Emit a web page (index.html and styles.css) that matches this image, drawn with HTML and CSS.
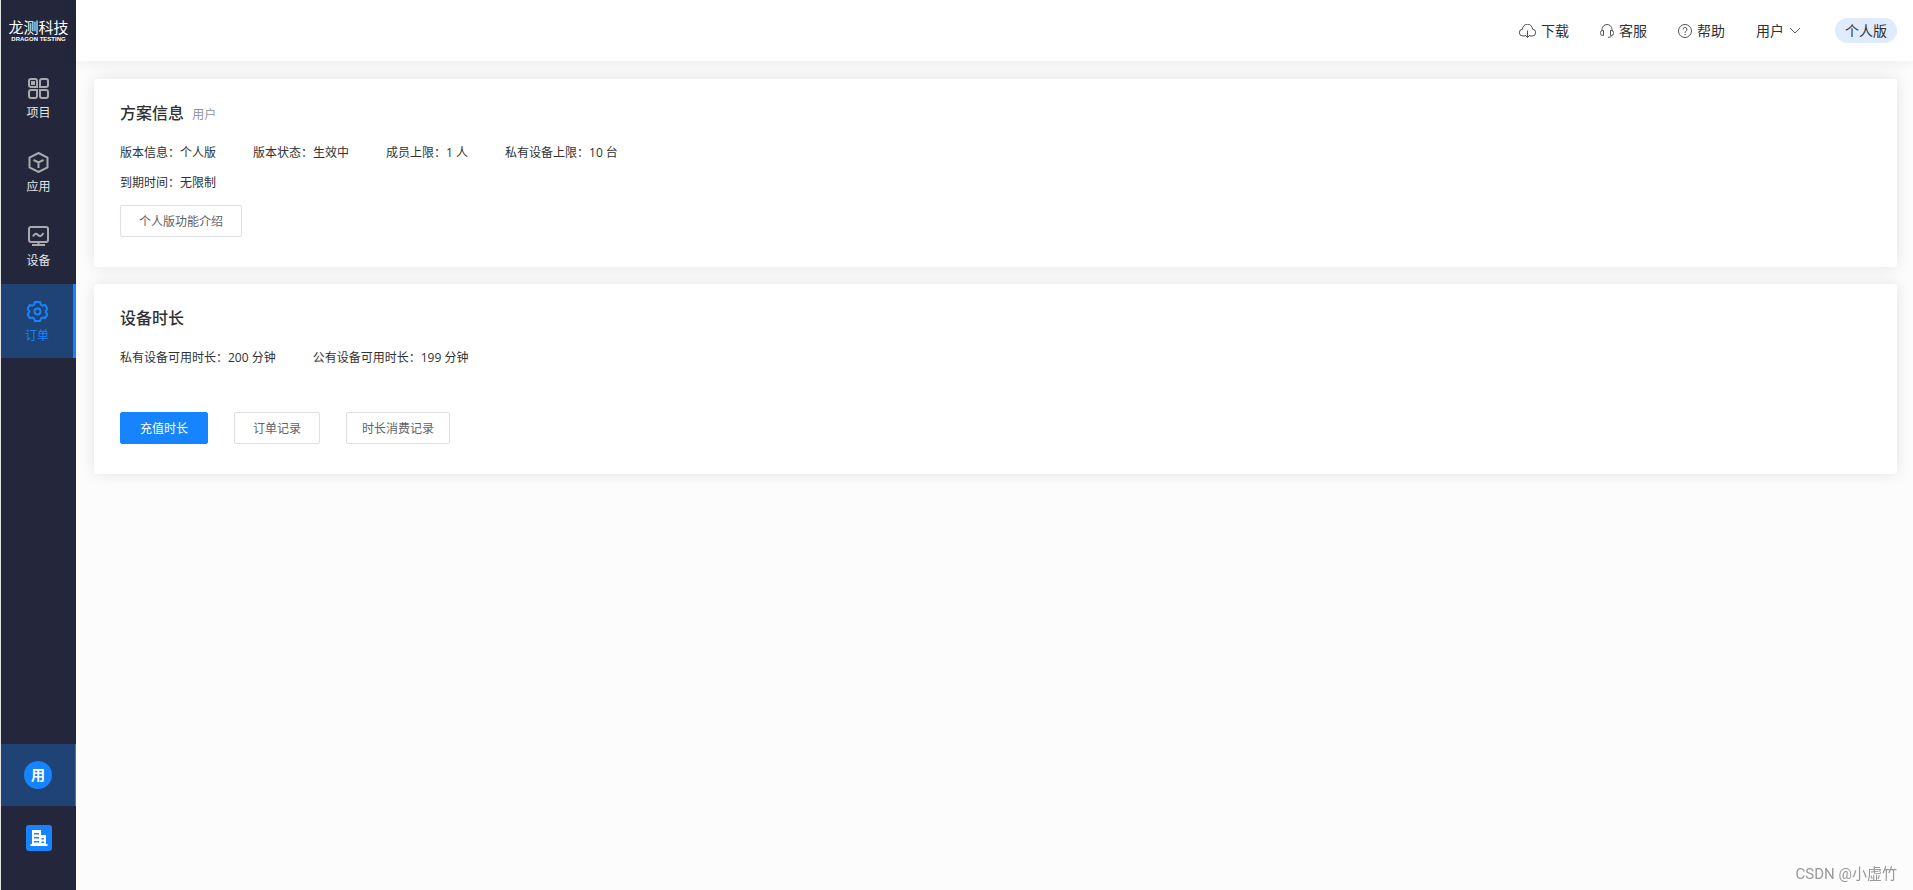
FILE: index.html
```html
<!DOCTYPE html>
<html lang="zh-CN">
<head>
    <meta charset="UTF-8">
    <meta name="viewport" content="width=device-width, initial-scale=1.0">
    <title>订单</title>
    <link rel="stylesheet" href="styles.css">
</head>
<body>
    <aside class="sidebar">
        <a class="logo" href="#">
            <span class="logo-name">龙测科技</span>
            <span class="logo-sub">DRAGON TESTING</span>
        </a>
        <nav class="menu">
            <a class="menu-item" href="#">
                <svg class="menu-icon" viewBox="0 0 21 21">
                    <path d="M3 1h4a2 2 0 0 1 2 2v6H3a2 2 0 0 1-2-2V3a2 2 0 0 1 2-2zM14 1h4a2 2 0 0 1 2 2v4a2 2 0 0 1-2 2h-6V3a2 2 0 0 1 2-2zM3 12h6v6a2 2 0 0 1-2 2H3a2 2 0 0 1-2-2v-4a2 2 0 0 1 2-2zM12 12h6a2 2 0 0 1 2 2v4a2 2 0 0 1-2 2h-4a2 2 0 0 1-2-2z"/>
                    <rect class="solid" x="3" y="3" width="4" height="4"/>
                </svg>
                <span>项目</span>
            </a>
            <a class="menu-item" href="#">
                <svg class="menu-icon" viewBox="0 0 21 21">
                    <path d="M10.500 1 19.500 5.500v10L10.500 20l-9-4.500v-10z"/>
                    <path d="M5.500 8l5 2.500 5-2.500M10.500 10.500v5.500"/>
                </svg>
                <span>应用</span>
            </a>
            <a class="menu-item" href="#">
                <svg class="menu-icon" viewBox="0 0 21 21">
                    <rect x="1" y="1" width="19" height="15" rx="2"/>
                    <path d="M5 10.500c1.500-3 3-3.500 5-1.500s3.500 1 5.500-2M10.500 16v3M4 19h13"/>
                </svg>
                <span>设备</span>
            </a>
            <a class="menu-item active" href="#">
                <svg class="menu-icon" viewBox="0 0 21 21">
                    <path d="M8 1h5l1 2.800 1.500.8 2.800-.5 2.200 3.900-1.800 1.800v1.500l1.800 2-2.200 3.800-2.800-.5-1.500.8-1 2.600H8l-1-2.600-1.500-.8-2.800.5L.5 13.300l1.800-2V9.800L.5 8l2.200-3.900 2.800.5L7 3.800z"/>
                    <circle cx="10.500" cy="10.500" r="3"/>
                </svg>
                <span>订单</span>
            </a>
        </nav>
        <div class="switcher">
            <a class="switch-item current" href="#"><span class="avatar">用</span></a>
            <a class="switch-item" href="#" aria-label="企业">
                <svg class="company" viewBox="0 0 26 26">
                    <rect width="26" height="26" rx="3" fill="#1684fe"/>
                    <path fill="#fff" fill-rule="evenodd" d="M6 5h9v5h5v9h1.500v2h-17v-2H6zM8 8v1.500h5V8zm0 4v1.500h5V12zm0 4v1.500h5V16zm7.500-3v1.500h2.500V13zm0 3.500V18h2.500v-1.500z"/>
                </svg>
            </a>
        </div>
    </aside>
    <div class="page">
        <header class="topbar">
            <nav class="top-links">
                <a class="top-link" href="#">
                    <svg class="top-icon wide" viewBox="0 0 17 14">
                        <path d="M6 12H4A3.400 3.400 0 0 1 3.500 5.200a5 5 0 0 1 10 0A3.400 3.400 0 0 1 13 12H11M8.500 6.500v6.800M6 11l2.500 2.500L11 11"/>
                    </svg>
                    下载
                </a>
                <a class="top-link" href="#">
                    <svg class="top-icon" viewBox="0 0 14 14">
                        <path d="M2 7V5.500a5 5 0 0 1 10 0V7M3.500 6.500v5H2.500A2 2 0 0 1 .5 9.500v-1a2 2 0 0 1 2-2zM10.500 6.500v5h1a2 2 0 0 0 2-2v-1a2 2 0 0 0-2-2zM11.500 11.500c0 1.300-1 1.800-3.500 1.800"/>
                    </svg>
                    客服
                </a>
                <a class="top-link" href="#">
                    <svg class="top-icon" viewBox="0 0 14 14">
                        <circle cx="7" cy="7" r="6.500"/>
                        <path d="M5 5.500a2 2 0 1 1 2.800 1.800Q7 7.700 7 8.800M7 10v1.200"/>
                    </svg>
                    帮助
                </a>
                <button class="top-link user" type="button">
                    用户
                    <svg class="chevron" viewBox="0 0 12 8"><path d="M1 1l5 5 5-5"/></svg>
                </button>
            </nav>
            <span class="version">个人版</span>
        </header>
        <main class="content">
            <section class="card">
                <h2 class="card-title">方案信息 <small>用户</small></h2>
                <div class="info">
                    <span>版本信息：个人版</span>
                    <span>版本状态：生效中</span>
                    <span>成员上限：1 人</span>
                    <span>私有设备上限：10 台</span>
                </div>
                <div class="info">
                    <span>到期时间：无限制</span>
                </div>
                <div class="actions">
                    <button class="btn" type="button">个人版功能介绍</button>
                </div>
            </section>
            <section class="card">
                <h2 class="card-title">设备时长</h2>
                <div class="info">
                    <span>私有设备可用时长：200 分钟</span>
                    <span>公有设备可用时长：199 分钟</span>
                </div>
                <div class="actions spaced">
                    <button class="btn primary" type="button">充值时长</button>
                    <button class="btn" type="button">订单记录</button>
                    <button class="btn narrow" type="button">时长消费记录</button>
                </div>
            </section>
        </main>
    </div>
    <div class="watermark">CSDN @小虚竹</div>
</body>
</html>
```

FILE: styles.css
```css
* {
    box-sizing: border-box;
}

body {
    margin: 0;
    min-height: 100vh;
    display: flex;
    font-family: "Open Sans", "Noto Sans CJK SC", sans-serif;
    font-size: 12px;
    line-height: 18px;
    color: #303133;
    background-color: #fcfcfc;
}

a {
    color: inherit;
    text-decoration: none;
}

button {
    font-family: inherit;
    cursor: pointer;
}

/* sidebar */
.sidebar {
    width: 76px;
    flex-shrink: 0;
    display: flex;
    flex-direction: column;
    border-left: 1px solid #e4e5e8;
    background-color: #24273b;
    color: #e4e5e8;
}

.logo {
    height: 62px;
    padding-top: 20px;
    display: flex;
    flex-direction: column;
    align-items: center;
    color: #fff;
    white-space: nowrap;
}

.logo-name {
    font-size: 15px;
    line-height: 15px;
}

.logo-sub {
    font-family: "Liberation Sans", sans-serif;
    font-size: 6px;
    font-weight: bold;
    line-height: 8px;
}

.menu-item {
    height: 74px;
    padding-top: 16px;
    display: flex;
    flex-direction: column;
    align-items: center;
    gap: 5px;
}

.menu-icon {
    width: 21px;
    height: 21px;
    fill: none;
    stroke: #a9aaad;
    stroke-width: 2;
}

.menu-icon .solid {
    fill: #a9aaad;
    stroke: none;
}

.menu-item.active {
    padding-top: 17px;
    color: #1684fe;
    background-color: #204375;
    border-right: 3px solid #1684fe;
}

.active .menu-icon {
    stroke: #1684fe;
}

.switcher {
    margin-top: auto;
    padding-bottom: 20px;
}

.switch-item {
    height: 64px;
    display: flex;
    align-items: center;
    justify-content: center;
}

.switch-item.current {
    height: 62px;
    background-color: #204375;
    border-right: 1px solid #1684fe;
}

.avatar {
    width: 28px;
    height: 28px;
    border-radius: 50%;
    background-color: #1684fe;
    color: #fff;
    font-size: 14px;
    font-weight: bold;
    line-height: 28px;
    text-align: center;
}

.company {
    width: 26px;
    height: 26px;
}

/* top bar */
.page {
    flex: 1;
    min-width: 0;
}

.topbar {
    height: 61px;
    padding-right: 16px;
    display: flex;
    align-items: center;
    justify-content: flex-end;
    gap: 34px;
    background-color: #fff;
    box-shadow: 0 0 16px rgba(0, 0, 0, 0.08);
    font-size: 14px;
}

.top-links {
    display: flex;
    gap: 31px;
}

.top-link {
    display: flex;
    align-items: center;
    gap: 5px;
}

.user {
    padding: 0;
    border: none;
    background: none;
    color: inherit;
    font-size: 14px;
    line-height: 18px;
}

.top-icon {
    width: 14px;
    height: 14px;
    fill: none;
    stroke: #505155;
}

.top-icon.wide {
    width: 17px;
}

.chevron {
    width: 12px;
    height: 8px;
    fill: none;
    stroke: #606266;
}

.version {
    padding: 0 10px;
    border-radius: 13px;
    background-color: #e0ebfe;
    line-height: 25px;
}

/* cards */
.content {
    padding: 18px 16px 18px 18px;
    display: flex;
    flex-direction: column;
    gap: 17px;
}

.card {
    padding: 22px 26px 30px;
    border-radius: 3px;
    background-color: #fff;
    box-shadow: 0 0 16px rgba(0, 0, 0, 0.1);
}

.card-title {
    margin: 0 0 15px;
    font-size: 16px;
    font-weight: 500;
    line-height: 24px;
}

.card-title small {
    margin-left: 4px;
    color: #909399;
    font-size: 12px;
    font-weight: normal;
    line-height: 12px;
}

.info {
    display: flex;
    flex-wrap: wrap;
    gap: 37px;
    line-height: 26px;
}

.info + .info {
    margin-top: 4px;
}

.actions {
    margin-top: 9px;
    display: flex;
    gap: 26px;
}

.actions.spaced {
    margin-top: 41px;
}

.btn {
    height: 32px;
    padding: 0 18px;
    border: 1px solid #dcdfe6;
    border-radius: 2px;
    background-color: #fff;
    color: #606266;
    font-size: 12px;
}

.btn.narrow {
    padding: 0 15px;
}

.btn.primary {
    padding: 0 19px;
    border-color: #1684fe;
    background-color: #1684fe;
    color: #fff;
}

.watermark {
    position: fixed;
    right: 16px;
    bottom: 6px;
    color: #999;
    font-family: Roboto, "Noto Sans CJK SC", sans-serif;
    font-size: 15px;
    line-height: 20px;
}
```
